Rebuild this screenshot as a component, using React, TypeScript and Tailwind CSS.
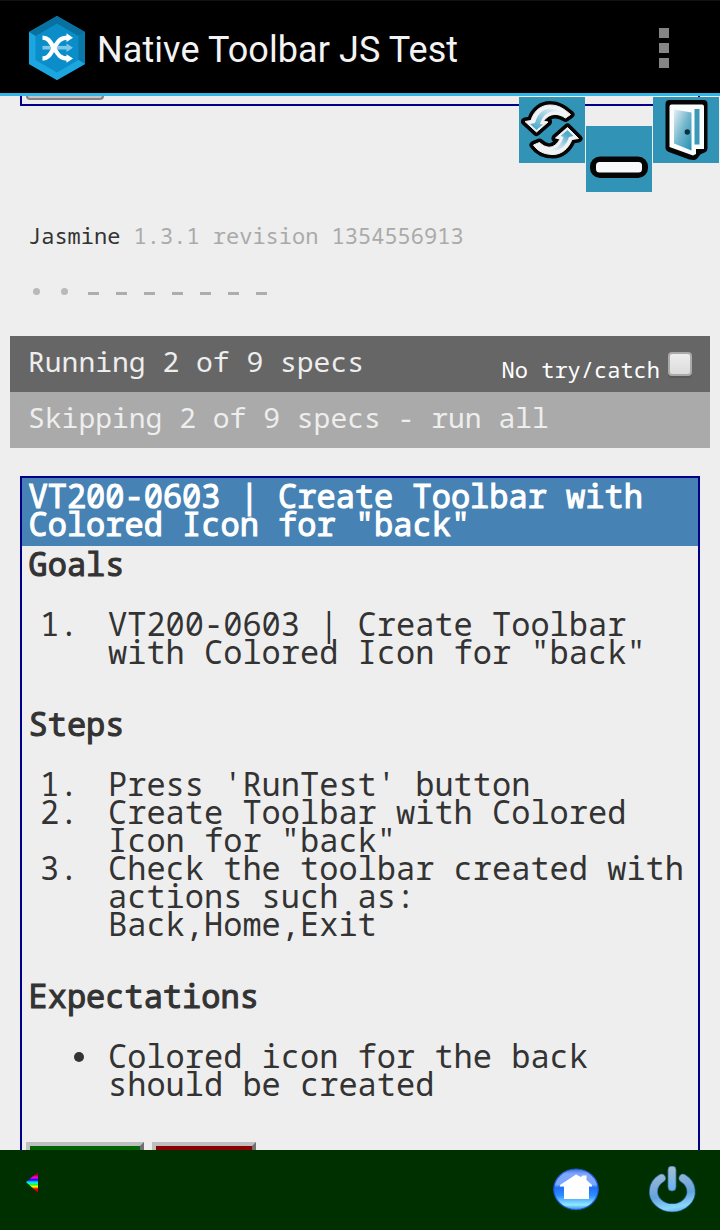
import React from "react";

function AppLogo() {
  return (
    <svg className="block h-16 w-14" viewBox="0 0 56 64">
      <path d="M28 0L56 16V48L28 64L0 48V16Z" fill="#0a8dc8" />
      <path d="M0 16L28 0L56 16L49.500 20L28 7.500L6.500 20Z" fill="#08719f" />
      <path d="M56 16V48L49.500 44V20Z" fill="#0879a9" />
      <path d="M0 16L6.500 20V44L28 56.500L49.500 44L56 48L28 64L0 48Z" fill="#1ba6df" />
      <path d="M13.500 31.700H38" stroke="#7cc8e8" strokeWidth="3.600" />
      <path d="M37.500 27.500L44 31.700L37.500 36Z" fill="#7cc8e8" />
      <path d="M13.500 42.500C19 42.500 20.500 39.500 25 32S31.500 21.700 39 21.700" stroke="#fff" strokeWidth="4.300" fill="none" />
      <path d="M13.500 21.700C19 21.700 20.500 24.500 25 32S31.500 42.500 39 42.500" stroke="#fff" strokeWidth="4.300" fill="none" />
      <path d="M37.500 17.300L44 21.700L37.500 26ZM37.500 38.200L44 42.500L37.500 46.800Z" fill="#fff" />
    </svg>
  );
}

const topArrow = "M6 24.500L12 23.500C15 13 23 8 31 8C40 8 45 12 51.500 17.500L46.500 21C39 16 31 15.500 24.500 24L29 25L17.500 35Z";
const bottomArrow = "M14.500 48L20.500 45.500C27 51.500 35 53 41 42L36.500 41L48.500 30.500L59.500 41.500L53 42.500C49.500 51.500 42.500 57.500 34 57.500C25 57.500 18.500 54 14.500 48Z";

function RefreshTile() {
  return (
    <svg className="block h-[66px] w-[66px] bg-[#3194b6]" viewBox="0 0 66 66">
      <defs>
        <linearGradient id="arrowTop" x1="1" y1="0" x2="0" y2="1">
          <stop offset="0" stopColor="#fff" />
          <stop offset=".45" stopColor="#9fd0e2" />
          <stop offset="1" stopColor="#3a9fc2" />
        </linearGradient>
        <linearGradient id="arrowBottom" x1="0" y1="1" x2="1" y2="0">
          <stop offset="0" stopColor="#fff" />
          <stop offset=".45" stopColor="#b5dae7" />
          <stop offset=".8" stopColor="#4fa9c9" />
          <stop offset="1" stopColor="#5fb0cd" />
        </linearGradient>
      </defs>
      <g strokeLinejoin="round" className="blur-[0.7px]">
        <g stroke="#050505" strokeWidth="8" fill="#f1f3f5">
          <path d={topArrow} />
          <path d={bottomArrow} />
        </g>
        <path d={topArrow} fill="#f1f3f5" stroke="#f1f3f5" strokeWidth="1" />
        <path d={bottomArrow} fill="#f1f3f5" stroke="#f1f3f5" strokeWidth="1" />
        <path d="M11 27L16 26C19 16 25 11 33 12C38 12.500 42 14 45 16.500C35 12 25 14 21 27L24 27.500L17.500 33Z" fill="url(#arrowTop)" />
        <path d="M22 50.500C31 56 41 52 44.500 40L41.500 39L48.500 33L54.500 39L50 40C46 52 37 57.500 22 50.500Z" fill="url(#arrowBottom)" />
      </g>
    </svg>
  );
}

function MinimizeTile() {
  return (
    <svg className="block h-[66px] w-[66px] bg-[#3194b6]" viewBox="0 0 66 66">
      <g className="blur-[0.7px]">
        <rect x="4" y="30.500" width="58" height="21.500" rx="10" fill="#050505" />
        <rect x="10" y="36" width="46" height="10.500" rx="3.500" fill="#f7f9fb" />
      </g>
    </svg>
  );
}

function ExitTile() {
  return (
    <svg className="block h-[66px] w-[66px] bg-[#3194b6]" viewBox="0 0 66 66">
      <defs>
        <linearGradient id="doorPanel" x1="0" y1="0" x2="1" y2="1">
          <stop offset="0" stopColor="#e4f0f4" />
          <stop offset=".5" stopColor="#72b5cd" />
          <stop offset="1" stopColor="#2391b5" />
        </linearGradient>
      </defs>
      <g className="blur-[0.7px]">
        <path d="M16.500 7H50.500V51.500L45 54L41 59L37 58.500L16.500 51Z" fill="#050505" stroke="#050505" strokeWidth="8" strokeLinejoin="round" />
        <path d="M18.500 7.500H49Q51 7.500 51 9.500V52H43V57L40 58.500L16.500 50V9.500Q16.500 7.500 18.500 7.500Z" fill="#fbfcfc" />
        <path d="M21 12.500L38.500 15.500V53.500L21 46.500Z" fill="url(#doorPanel)" />
        <path d="M41.500 12H46.500V47.500H41.500Z" fill="#3b98b8" />
        <circle cx="34.300" cy="35" r="2.700" fill="#07303d" />
      </g>
    </svg>
  );
}

function RainbowBack() {
  return (
    <svg className="block h-[21px] w-3" viewBox="0 0 12 21">
      <defs>
        <linearGradient id="rainbow" x1="0" y1="0" x2="0" y2="1">
          <stop offset="0" stopColor="#600" />
          <stop offset=".14" stopColor="#a0002a" />
          <stop offset=".26" stopColor="#f0d" />
          <stop offset=".38" stopColor="#20f" />
          <stop offset=".47" stopColor="#0cf" />
          <stop offset=".53" stopColor="#0fc" />
          <stop offset=".61" stopColor="#2f0" />
          <stop offset=".7" stopColor="#ff0" />
          <stop offset=".8" stopColor="#f00" />
          <stop offset="1" stopColor="#800" />
        </linearGradient>
      </defs>
      <path d="M12 0V21L0 10Z" fill="url(#rainbow)" />
    </svg>
  );
}

function HomeIcon() {
  return (
    <svg className="block h-12 w-12" viewBox="0 0 48 48">
      <defs>
        <linearGradient id="homeFill" x1="0" y1="0" x2="0" y2="1">
          <stop offset="0" stopColor="#3a6fe8" />
          <stop offset=".12" stopColor="#82a7fa" />
          <stop offset=".38" stopColor="#79a8ff" />
          <stop offset=".46" stopColor="#1d70fa" />
          <stop offset=".65" stopColor="#2f8bff" />
          <stop offset=".88" stopColor="#8feaff" />
          <stop offset="1" stopColor="#3a8de0" />
        </linearGradient>
      </defs>
      <g className="blur-[0.7px]">
        <ellipse cx="24" cy="23.300" rx="22.200" ry="20.300" fill="url(#homeFill)" stroke="#1f5be0" strokeWidth="1.200" />
        <path d="M8 19L24 8.500L29 11L30.500 9.500H34.500V14L40 19V20.500H37V33H12V20.500H8Z" fill="#fff" />
      </g>
    </svg>
  );
}

function PowerIcon() {
  return (
    <svg className="block h-12 w-12" viewBox="0 0 48 48">
      <defs>
        <linearGradient id="powerFill" gradientUnits="userSpaceOnUse" x1="20" y1="0" x2="28" y2="48">
          <stop offset="0" stopColor="#a4bfd9" />
          <stop offset=".3" stopColor="#8ab0d6" />
          <stop offset=".6" stopColor="#62a4dc" />
          <stop offset=".86" stopColor="#8bd5fa" />
          <stop offset="1" stopColor="#58aadd" />
        </linearGradient>
        <linearGradient id="stemFill" x1="0" y1="0" x2="0" y2="1">
          <stop offset="0" stopColor="#a9bdd3" />
          <stop offset="1" stopColor="#62b4ee" />
        </linearGradient>
      </defs>
      <g className="blur-[0.7px]">
        <path d="M13.500 12.200A18.800 16.300 0 1 0 35 12.200" fill="none" stroke="#24619a" strokeWidth="9" strokeLinecap="round" />
        <path d="M13.500 12.200A18.800 16.300 0 1 0 35 12.200" fill="none" stroke="url(#powerFill)" strokeWidth="7.500" strokeLinecap="round" />
        <path d="M20 3.500A4 3.500 0 0 1 28 3.500V21A4 4 0 0 1 20 21Z" fill="url(#stemFill)" stroke="#386f9f" strokeWidth=".8" />
      </g>
    </svg>
  );
}

function Heading({ children }: { children: React.ReactNode }) {
  return <h2 className="h-[28px] pl-[0.5px] whitespace-nowrap font-normal [-webkit-text-stroke:1.1px_#333]">{children}</h2>;
}

function Item({ marker, lines }: { marker: string; lines: string[] }) {
  return (
    <li className="flex">
      <span className="w-[80px] shrink-0 whitespace-pre pl-[12px]">{marker}</span>
      <div className="whitespace-nowrap">
        {lines.map((line) => (
          <div key={line}>{line}</div>
        ))}
      </div>
    </li>
  );
}

export default function App() {
  return (
    <div className="flex h-[1230px] w-[720px] flex-col overflow-hidden bg-[#eee] font-['Droid_Sans_Mono','Noto_Sans_Mono','DejaVu_Sans_Mono',monospace] text-[#333]">
      <header className="flex h-24 shrink-0 items-start border-t border-b-[3px] border-t-[#111] border-b-[#33b5e5] bg-black pl-[28.5px]">
        <div className="mt-[15px]">
          <AppLogo />
        </div>
        <h1 className="mt-[28px] ml-[12.5px] font-['Roboto',sans-serif] text-[36px] leading-[42px] tracking-[0.08px] whitespace-nowrap text-[#f3f3f3]">
          Native Toolbar JS Test
        </h1>
        <div className="mt-[27px] mr-[51px] ml-auto flex flex-col gap-[5px]">
          <i className="size-[10px] bg-[#858585]" />
          <i className="size-[10px] bg-[#858585]" />
          <i className="size-[10px] bg-[#858585]" />
        </div>
      </header>

      <main className="relative h-[1054px] shrink-0 overflow-hidden">
        <div className="mx-5 h-[10px] border-x-2 border-b-2 border-[#00008b] px-1">
          <div className="h-1 w-[78px] rounded-b-sm border-x-2 border-b-2 border-[#858585] bg-[#c4c4c4]" />
        </div>
        <div className="absolute top-px right-px flex gap-px">
          <RefreshTile />
          <div className="mt-[29px]">
            <MinimizeTile />
          </div>
          <ExitTile />
        </div>

        <div className="mt-[115px] ml-[28px] h-[28px] text-[22px] leading-[28px] whitespace-pre">
          Jasmine <span className="text-[#aaa]">1.3.1 revision 1354556913</span>
        </div>
        <div className="mt-[28px] ml-[28px] flex h-[28px] items-center text-[#b5b5b5]">
          <span className="flex w-[28px] pl-[5px]"><i className="h-[7px] w-[7px] rounded-full bg-[#b9b9b9]" /></span>
          <span className="flex w-[28px] pl-[5px]"><i className="h-[7px] w-[7px] rounded-full bg-[#b9b9b9]" /></span>
          {[0, 1, 2, 3, 4, 5, 6].map((n) => (
            <span key={n} className="flex w-[28px] pt-[4px] pl-[4px]">
              <i className="h-[3px] w-[11px] bg-[#adadad]" />
            </span>
          ))}
        </div>

        <section className="mx-[10px] mt-[31px] text-[28px] leading-[56px] whitespace-nowrap text-[#eee]">
          <div className="flex h-[56px] bg-[#666] pr-[18px] pl-[18px]">
            <span className="-mt-[3px]">Running 2 of 9 specs</span>
            <span className="ml-auto pt-[5px] text-[22px] text-white">No try/catch</span>
            <i className="mt-[16px] ml-[8px] size-6 rounded-[4px] border-2 border-[#aaa] bg-linear-to-b from-[#eee] to-[#dcdcdc] shadow-[0_2px_0_#595959]" />
          </div>
          <div className="flex h-[56px] bg-[#aaa] pl-[18px]">
            <span className="-mt-[3px]">Skipping 2 of 9 specs - run all</span>
          </div>
        </section>

        <section className="mx-5 mt-7 h-[720px] border-2 border-[#00008b] text-[32px] leading-[28px]">
          <div className="h-[68px] bg-[#4682b4] pt-[4px] pl-[6.5px] whitespace-nowrap text-white [-webkit-text-stroke:1.1px_#fff]">
            <div>VT200-0603 | Create Toolbar with</div>
            <div>Colored Icon for "back"</div>
          </div>
          <div className="pt-[4px] pl-[6px]">
            <Heading>Goals</Heading>
            <ol className="mt-8">
              <Item marker="1." lines={["VT200-0603 | Create Toolbar", 'with Colored Icon for "back"']} />
            </ol>
            <div className="mt-[44px]">
              <Heading>Steps</Heading>
            </div>
            <ol className="mt-8">
              <Item marker="1." lines={["Press 'RunTest' button"]} />
              <Item marker="2." lines={["Create Toolbar with Colored", 'Icon for "back"']} />
              <Item marker="3." lines={["Check the toolbar created with", "actions such as:", "Back,Home,Exit"]} />
            </ol>
            <div className="mt-[44px]">
              <Heading>Expectations</Heading>
            </div>
            <ul className="mt-8 flex">
              <li className="flex">
                <span className="w-[80px] shrink-0 pt-[10px] pl-[46px]">
                  <i className="block size-[10px] rounded-full bg-[#333]" />
                </span>
                <div className="whitespace-nowrap">
                  <div>Colored icon for the back</div>
                  <div>should be created</div>
                </div>
              </li>
            </ul>
            <div className="mt-[44px] -ml-[2px] flex gap-2">
              <div className="h-16 w-[118px] border-4 border-t-[#bfbfbf] border-r-[#707070] border-b-[#707070] border-l-[#bfbfbf] bg-[#006400]" />
              <div className="h-16 w-[104px] border-4 border-t-[#bfbfbf] border-r-[#707070] border-b-[#707070] border-l-[#bfbfbf] bg-[#8b0000]" />
            </div>
          </div>
        </section>
      </main>

      <footer className="flex h-20 shrink-0 items-start bg-[#003000] pl-[26px]">
        <div className="mt-[22px]">
          <RainbowBack />
        </div>
        <div className="mt-4 mr-6 ml-auto flex gap-12">
          <HomeIcon />
          <PowerIcon />
        </div>
      </footer>
    </div>
  );
}
